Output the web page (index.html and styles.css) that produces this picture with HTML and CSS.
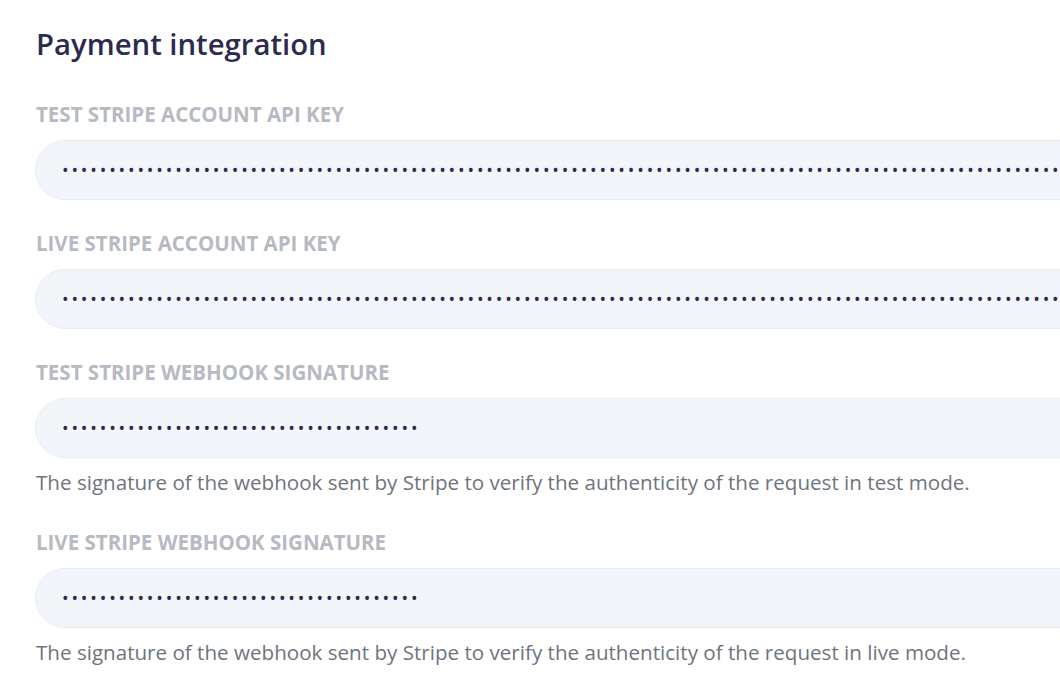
FILE: index.html
```
<!DOCTYPE html>
<html lang="en">
<head>
<meta charset="utf-8">
<title>Payment integration</title>
<link rel="stylesheet" href="styles.css">
</head>
<body>
<main class="page">
  <h1 class="title">Payment integration</h1>
  <div class="field">
    <label class="label" for="k1">TEST STRIPE ACCOUNT API KEY</label>
    <input class="input" id="k1" type="password" value="sk_test_51H8xYzAbCdEfGhIjKlMnOpQrStUvWxYz0123456789abcdefghijklmnopqrstuvwxyzABCDEFGHIJKLMNOPQRSTUVWXYZ0123456789">
  </div>
  <div class="field">
    <label class="label" for="k2">LIVE STRIPE ACCOUNT API KEY</label>
    <input class="input" id="k2" type="password" value="sk_live_51H8xYzAbCdEfGhIjKlMnOpQrStUvWxYz0123456789abcdefghijklmnopqrstuvwxyzABCDEFGHIJKLMNOPQRSTUVWXYZ0123456789">
  </div>
  <div class="field">
    <label class="label" for="k3">TEST STRIPE WEBHOOK SIGNATURE</label>
    <input class="input" id="k3" type="password" value="whsec_0123456789abcdefghijklmnopqrstuv">
    <p class="help">The signature of the webhook sent by Stripe to verify the authenticity of the request in test mode.</p>
  </div>
  <div class="field">
    <label class="label" for="k4">LIVE STRIPE WEBHOOK SIGNATURE</label>
    <input class="input" id="k4" type="password" value="whsec_9876543210zyxwvutsrqponmlkjihgfe">
    <p class="help">The signature of the webhook sent by Stripe to verify the authenticity of the request in live mode.</p>
  </div>
</main>
</body>
</html>
```
FILE: styles.css
```
html, body {
  margin: 0;
  padding: 0;
  background: #ffffff;
  overflow: hidden;
}
body {
  font-family: "Open Sans", "Noto Sans", sans-serif;
}
.page {
  width: 1200px;
  padding: 26px 0 0 35px;
  box-sizing: border-box;
}
.title {
  margin: 0 0 40px 1px;
  font-size: 29.3px;
  line-height: 36px;
  font-weight: 600;
  color: #2b2b4f;
}
.field {
  display: flex;
  flex-direction: column;
  margin-bottom: 31px;
}
.label {
  margin: 0 0 14px 1px;
  font-size: 20.5px;
  line-height: 24px;
  font-weight: 700;
  color: #b6bac2;
}
.input {
  height: 60px;
  box-sizing: border-box;
  padding: 0 0 0 26px;
  border: 1px solid #e8edf3;
  border-radius: 30px;
  background: #f2f5fa;
  font-family: "Open Sans", sans-serif;
  font-size: 17.5px;
  letter-spacing: 2.85px;
  color: #2b2b4f;
  outline: none;
}
.help {
  margin: 12px 0 5px 1px;
  font-size: 20.6px;
  line-height: 24px;
  color: #6f747c;
}
```
